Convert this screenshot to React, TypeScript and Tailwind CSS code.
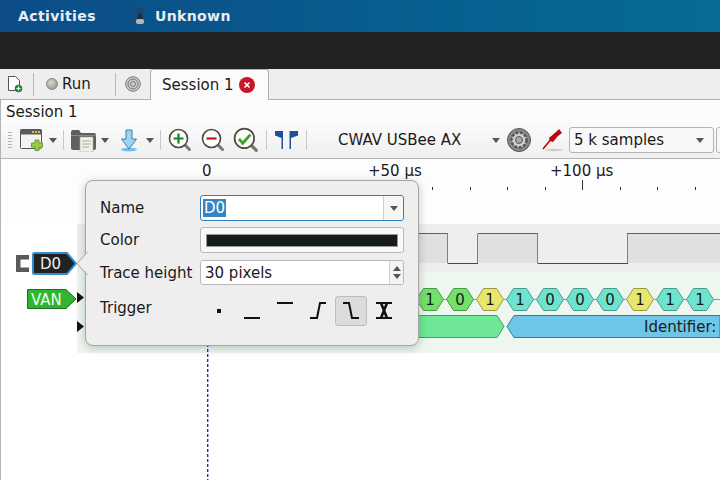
const Caret = ({ className = '' }: { className?: string }) => (
  <svg width="8" height="5" viewBox="0 0 8 5" className={`shrink-0 ${className}`}>
    <path d="M0 0h8L4 5z" fill="#555" />
  </svg>
);

const Sep = ({ className = '' }: { className?: string }) => <div className={`w-px h-[20px] bg-[#c8c8c8] shrink-0 ${className}`} />;

const Lens = ({ children, size = 24 }: { children: React.ReactNode; size?: number }) => (
  <svg width={size} height={size} viewBox="0 0 24 24" className="shrink-0">
    <path d="M15.5 15.5l6 6" stroke="#777" strokeWidth="3" strokeLinecap="round" />
    <circle cx="10.5" cy="10.5" r="9" fill="#fdfdf8" stroke="#4b4b44" strokeWidth="1.6" />
    {children}
  </svg>
);

// high stretches of the D0 signal, in trace coordinates
const SIGNAL_HIGH = [[333, 371], [401, 461], [550, 643]];

const BITS = [
  { x: 353, v: '1', fill: '#73e06c', line: '#4c9a48' },
  { x: 383, v: '0', fill: '#73e06c', line: '#4c9a48' },
  { x: 413, v: '1', fill: '#e8e66c', line: '#99984a' },
  { x: 443, v: '1', fill: '#6ee4d0', line: '#4a9a8c' },
  { x: 473, v: '0', fill: '#6ee4d0', line: '#4a9a8c' },
  { x: 503, v: '0', fill: '#6ee4d0', line: '#4a9a8c' },
  { x: 533, v: '0', fill: '#6ee4d0', line: '#4a9a8c' },
  { x: 563, v: '1', fill: '#e8e66c', line: '#99984a' },
  { x: 593, v: '1', fill: '#6ee4d0', line: '#4a9a8c' },
  { x: 623, v: '1', fill: '#6ee4d0', line: '#4a9a8c' },
];

const TICKS = [432, 469.5, 507, 544.5, 582, 619.5, 657, 694.5];

export default function App() {
  return (
    <div className="relative w-[720px] h-[480px] overflow-hidden flex flex-col bg-white text-[15px] text-[#1a1a1a] font-['DejaVu_Sans',sans-serif]">
      {/* Desktop top bar */}
      <div className="h-8 shrink-0 flex items-center bg-gradient-to-r from-[#0c4c87] to-[#056b96] text-[#e8eef3] font-bold text-[14px] tracking-[0.4px]">
        <span className="ml-[18px]">Activities</span>
        <svg width="14" height="18" viewBox="0 0 14 18" className="ml-[37px] shrink-0">
          <path d="M7 1v6M2 4l4 4M12 4L8 8M4 1.500L6.500 7M10 1.500L7.500 7" stroke="#26384a" strokeWidth="1" />
          <path d="M5 7h4l1 5H4z" fill="#222d38" />
          <rect x="3" y="12" width="8" height="5" rx="2" fill="#b5b5b5" />
        </svg>
        <span className="ml-[8px]">Unknown</span>
      </div>
      <div className="h-[37px] shrink-0 bg-[#222222]" />

      {/* Tab bar */}
      <div className="h-[31px] shrink-0 flex items-stretch bg-[#eeeeee] border-b border-[#b0b0b0]">
        <div className="w-[33px] flex items-center pl-[6px]">
          <svg width="17" height="18" viewBox="0 0 17 18">
            <path d="M2.5 1.5h7l4 4v10h-11z" fill="#fff" stroke="#555" strokeLinejoin="round" />
            <circle cx="12.5" cy="13.5" r="3.8" fill="#1a8a3a" />
            <path d="M10.5 13.5h4M12.5 11.5v4" stroke="#fff" strokeWidth="1.2" />
          </svg>
        </div>
        <div className="w-px h-[23px] self-center bg-[#b8b8b8]" />
        <div className="w-[81px] flex items-center pl-[12px] gap-[4px]">
          <div className="w-[12px] h-[12px] rounded-full bg-[radial-gradient(circle_at_40%_35%,#d8d8d0,#8a8a84)] border border-[#8a8a8a]" />
          <span>Run</span>
        </div>
        <div className="w-px h-[23px] self-center bg-[#b8b8b8]" />
        <div className="w-[34px] flex items-center justify-center">
          <svg width="16" height="16" viewBox="0 0 16 16" fill="none" stroke="#777">
            <circle cx="8" cy="8" r="7.3" fill="#ccc" />
            <circle cx="8" cy="8" r="5" />
            <circle cx="8" cy="8" r="2.5" />
          </svg>
        </div>
        <div className="w-[119px] h-[31px] flex items-center pl-[11px] gap-[5px] bg-[#fbfbfb] border border-b-0 border-[#b0b0b0] rounded-t-[3px]">
          <span className="whitespace-nowrap">Session 1</span>
          <svg width="16" height="16" viewBox="0 0 16 16" className="shrink-0">
            <circle cx="8" cy="8" r="8" fill="#c7162b" />
            <path d="M5.5 5.5l5 5M10.5 5.5l-5 5" stroke="#fff" strokeWidth="1.6" />
          </svg>
        </div>
      </div>

      <div className="flex-1 flex flex-col min-h-0 border-l border-[#b4b4b4]">
        <div className="h-[22px] shrink-0 flex items-center pl-[5px] pt-[2px] bg-[#fcfcfc]">Session 1</div>

        {/* Toolbar */}
        <div className="h-[37px] shrink-0 flex items-center bg-gradient-to-b from-[#fbfbfb] to-[#efefef] border-b border-[#b4b4b4]">
          <div className="ml-[7px] w-[4px] h-[18px] shrink-0 bg-[radial-gradient(#b0b0b0_35%,transparent_40%)] bg-[length:2px_3px]" />
          <svg width="24" height="22" viewBox="0 0 24 22" className="ml-[8px] shrink-0">
            <rect x="0.5" y="0.5" width="21" height="19" rx="1" fill="#f2f2f2" stroke="#555" />
            <rect x="0.5" y="0.5" width="21" height="5" fill="#5a5a5a" />
            <path d="M12 2h2v2h-2zM15 2h2v2h-2zM18 2h2v2h-2z" fill="#e8b33a" />
            <path d="M15 11h4v3h3.500v4H19v3.500h-4V18h-3.500v-4H15z" fill="#9bc94a" stroke="#6e9a33" />
          </svg>
          <Caret className="ml-[5px]" />
          <Sep className="ml-[6px]" />
          <svg width="25" height="23" viewBox="0 0 25 23" className="ml-[7px] shrink-0">
            <path d="M0 3a2 2 0 0 1 2-2h6l2 3h13a2 2 0 0 1 2 2v13a2 2 0 0 1-2 2H2a2 2 0 0 1-2-2z" fill="#5f5f5f" />
            <rect x="0" y="6" width="25" height="1" fill="#8a8a8a" />
            <rect x="9" y="8" width="13" height="15" fill="#f1efe6" stroke="#aaa" strokeWidth="0.6" />
            <path d="M11 12h9M11 15h9M11 18h7" stroke="#b0aea0" />
          </svg>
          <Caret className="ml-[5px]" />
          <svg width="20" height="23" viewBox="0 0 20 23" className="ml-[10px] shrink-0">
            <ellipse cx="10" cy="20.500" rx="8" ry="1.800" fill="#6fc0ee" />
            <path d="M7 1h6v9h4.500L10 20 2.500 10H7z" fill="#9ed3f3" stroke="#3a7fb0" />
          </svg>
          <Caret className="ml-[7px]" />
          <Sep className="ml-[6px]" />
          <div className="ml-[7px] flex shrink-0">
            <Lens>
              <path d="M5.500 10.500h10M10.500 5.500v10" stroke="#12852f" strokeWidth="2.200" />
            </Lens>
          </div>
          <div className="ml-[9px] flex shrink-0">
            <Lens>
              <path d="M5.500 10.500h10" stroke="#c8102e" strokeWidth="2.200" />
            </Lens>
          </div>
          <div className="ml-[8px] flex shrink-0">
            <Lens size={26}>
              <path d="M5.500 11l3.500 4 7-8" fill="none" stroke="#3aa02e" strokeWidth="2.600" />
            </Lens>
          </div>
          <Sep className="ml-[7px]" />
          <svg width="23" height="18" viewBox="0 0 23 18" className="ml-[8px] shrink-0">
            <path d="M0 0h8v18H6.500V7L0 4.500zM23 0h-8.500v18H16V7l7-2.500z" fill="#1f4f96" />
          </svg>
          <Sep className="ml-[8px]" />
          <span className="ml-[31px] mt-px w-[124px] shrink-0 whitespace-nowrap">CWAV USBee AX</span>
          <Caret className="ml-[30px]" />
          <svg width="24" height="24" viewBox="0 0 24 24" className="ml-[7px] shrink-0">
            <circle cx="12" cy="12" r="11.500" fill="#8a8a8a" stroke="#555" />
            <circle cx="12" cy="12" r="7.500" fill="#d0d0d0" stroke="#555" strokeWidth="2.500" strokeDasharray="3 1.500" />
            <circle cx="12" cy="12" r="3.500" fill="#aaa" stroke="#555" />
          </svg>
          <svg width="22" height="24" viewBox="0 0 22 24" className="ml-[11px] shrink-0">
            <ellipse cx="12" cy="22" rx="9" ry="1.200" fill="#ccc" />
            <path d="M1 21L10 10" stroke="#b00" strokeWidth="1.500" />
            <path d="M8 13l-1-3 7-6 3-3 3 4-4 3-5 6z" fill="#c00010" />
          </svg>
          <div className="ml-[5px] w-[145px] h-[26px] shrink-0 flex items-center justify-between pl-[4px] pr-[9px] bg-[#f8f8f8] border border-[#b4b4b4] rounded-[3px]">
            <span className="whitespace-nowrap">5 k samples</span>
            <Caret />
          </div>
          <div className="ml-[2px] w-[10px] h-[26px] shrink-0 bg-[#f8f8f8] border border-[#b4b4b4] rounded-l-[3px]" />
        </div>

        {/* Trace view */}
        <div className="relative flex-1 flex flex-col min-h-0 bg-white">
          <div className="h-[65px] shrink-0 relative bg-[#fdfdfd]">
            <span className="absolute left-[201px] top-[1px]">0</span>
            <span className="absolute left-[367px] top-[1px] whitespace-nowrap">+50 µs</span>
            <span className="absolute left-[549px] top-[1px] whitespace-nowrap">+100 µs</span>
            {TICKS.map((x) => (
              <div key={x} style={{ left: x - 1 }} className={`absolute w-px bg-[#333] ${x === 582 ? 'top-[21px] h-[10px]' : 'top-[28px] h-[3px]'}`} />
            ))}
          </div>

          {/* D0 row */}
          <div className="h-[48px] shrink-0 flex">
            <div className="w-[76px] shrink-0 flex items-start justify-end pt-[28px]">
              <svg width="13" height="17" viewBox="0 0 13 17" className="mr-[3px] mt-[3px] shrink-0">
                <path d="M13 2.250H2.250v12.500H13" fill="none" stroke="#5a5a5a" strokeWidth="4.500" />
              </svg>
              <div className="relative w-[45px] h-[23px] shrink-0">
                <svg width="45" height="23" viewBox="0 0 45 23" className="absolute inset-0">
                  <path d="M2.500 1h32.500l9 10.500-9 10.500H2.500a1.500 1.500 0 0 1-1.500-1.500v-18A1.500 1.500 0 0 1 2.500 1z" fill="#222" stroke="#2f8fd0" strokeWidth="2" />
                </svg>
                <span className="relative pl-[8px] leading-[25px] text-[#eeeeee] block">D0</span>
              </div>
            </div>
            <svg width="643" height="48" viewBox="0 0 643 48" className="shrink-0 bg-[#eeeeee]">
              {SIGNAL_HIGH.map(([a, b]) => (
                <rect key={a} x={a} y="9" width={b - a} height="30" fill="#e0e0e0" />
              ))}
              <path d="M370.500 9.500V39.500M400.500 9.500V39.500M460.500 9.500V39.500M550.500 9.500V39.500" fill="none" stroke="#808080" />
              <path d="M333 9.500h38M401 9.500h60M550 9.500h93" stroke="#129a12" fill="none" />
              <path d="M371 39.500h30M461 39.500h90" stroke="#c01515" fill="none" />
            </svg>
          </div>

          {/* VAN row */}
          <div className="h-[81px] shrink-0 flex">
            <div className="w-[76px] shrink-0 relative">
              <div className="absolute right-0 top-[17px] w-[50px] h-[20px]">
                <svg width="50" height="20" viewBox="0 0 50 20" className="absolute inset-0">
                  <path d="M0.500 0.500H39l10 9.500-10 9.500H0.500z" fill="#2fb52f" stroke="#1d701d" />
                </svg>
                <span className="relative block pl-[4px] leading-[22px] text-[#f0fff0]">VAN</span>
              </div>
            </div>
            <svg width="643" height="81" viewBox="0 0 643 81" className="shrink-0 bg-[#eef7ef] font-['DejaVu_Sans',sans-serif]">
              <path d="M0 20v11l7-5.500zM0 49v11l7-5.500z" fill="#111" />
              <path d="M340 27.500H643" stroke="#9a9a9a" />
              {BITS.map((b) => (
                <g key={b.x}>
                  <polygon
                    points={`${b.x - 13.500},27.500 ${b.x - 6.500},16.500 ${b.x + 6.500},16.500 ${b.x + 13.500},27.500 ${b.x + 6.500},38.500 ${b.x - 6.500},38.500`}
                    fill={b.fill}
                    stroke={b.line}
                  />
                  <text x={b.x} y="33" textAnchor="middle" fontSize="15" fill="#1a1a1a">{b.v}</text>
                </g>
              ))}
              <polygon points="330,43.500 420,43.500 427,54.500 420,65.500 330,65.500" fill="#6ee896" stroke="#4a9a68" />
              <polygon points="437,43.500 643,43.500 643,65.500 437,65.500 430,54.500" fill="#6dc6e6" stroke="#3a7a96" />
              <text x="567" y="60" fontSize="15" fill="#1a1a1a">Identifier:</text>
            </svg>
          </div>

          {/* Cursor line */}
          <div className="absolute left-[206px] top-[150px] bottom-0 flex">
            <div className="w-px bg-[repeating-linear-gradient(to_bottom,#2f2fa0_0,#2f2fa0_3px,transparent_3px,transparent_5px)]" />
            <div className="w-px bg-[repeating-linear-gradient(to_bottom,#a9a9e8_0,#a9a9e8_3px,transparent_3px,transparent_5px)]" />
          </div>

          {/* Popover */}
          <div className="absolute left-[84px] top-[21px] w-[334px] h-[166px] bg-[#eeeeee] border border-[#a6a6a6] rounded-[8px] shadow-[0_2px_10px_rgba(0,0,0,0.22)] pl-[14px] pr-[14px] pt-[14px]">
            <svg width="14" height="26" viewBox="0 0 14 26" className="absolute left-[-10px] top-[70px]">
              <path d="M13 0L1 12.500 14 25z" fill="#eeeeee" />
              <path d="M12 0.500L1 12.500 12 24.500" fill="none" stroke="#a6a6a6" />
            </svg>
            <div className="grid grid-cols-[100px_204px] gap-y-[6px] items-center">
              <span>Name</span>
              <div className="h-[26px] flex items-stretch bg-white border border-[#2f7fb8] rounded-[3px]">
                <div className="flex-1 flex items-center pl-[2px]">
                  <span className="bg-[#3584c4] text-white leading-[18px] px-px">D0</span>
                </div>
                <div className="w-[20px] flex items-center justify-center border-l border-[#cfcfcf] bg-[#f6f6f6] rounded-r-[3px]">
                  <Caret />
                </div>
              </div>
              <span>Color</span>
              <div className="h-[26px] flex items-center px-[5px] bg-[#f8f8f8] border border-[#b8b8b8] rounded-[3px]">
                <div className="w-full h-[13px] bg-[#151a1c] border border-[#9a9a9a]" />
              </div>
              <span className="whitespace-nowrap mt-[3px]">Trace height</span>
              <div className="h-[25px] mt-[1px] flex items-stretch bg-white border border-[#b8b8b8] rounded-[3px]">
                <span className="flex-1 pl-[4px] leading-[25px]">30 pixels</span>
                <div className="w-[14px] flex flex-col items-center justify-center gap-[3px] border-l border-[#cfcfcf] bg-[#f4f4f4] rounded-r-[3px]">
                  <svg width="8" height="5" viewBox="0 0 8 5"><path d="M0 5h8L4 0z" fill="#555" /></svg>
                  <Caret />
                </div>
              </div>
            </div>
            <div className="mt-[11px] flex items-center">
              <span className="w-[103px] shrink-0 -mt-[6px]">Trigger</span>
              <div className="flex items-center">
                <svg width="33" height="30" viewBox="0 0 33 30"><rect x="14" y="13" width="4" height="4" fill="#111" /></svg>
                <svg width="33" height="30" viewBox="0 0 33 30"><path d="M8 22h16" stroke="#111" strokeWidth="2" /></svg>
                <svg width="33" height="30" viewBox="0 0 33 30"><path d="M8 7h16" stroke="#111" strokeWidth="2" /></svg>
                <svg width="33" height="30" viewBox="0 0 33 30"><path d="M8 22h7l3-15h6" fill="none" stroke="#111" strokeWidth="2" /></svg>
                <div className="w-[32px] h-[30px] mr-[1px] bg-[#dcdcdc] border border-[#bdbdbd] rounded-[3px]">
                  <svg width="30" height="28" viewBox="0 0 30 28"><path d="M7 6h6l3 15h7" fill="none" stroke="#111" strokeWidth="2" /></svg>
                </div>
                <svg width="33" height="30" viewBox="0 0 33 30"><path d="M8 7h16M8 22h16" stroke="#111" strokeWidth="2" /><path d="M13 7l6 15M19 7l-6 15" fill="none" stroke="#111" strokeWidth="2.600" /></svg>
              </div>
            </div>
          </div>
        </div>
      </div>
    </div>
  );
}
